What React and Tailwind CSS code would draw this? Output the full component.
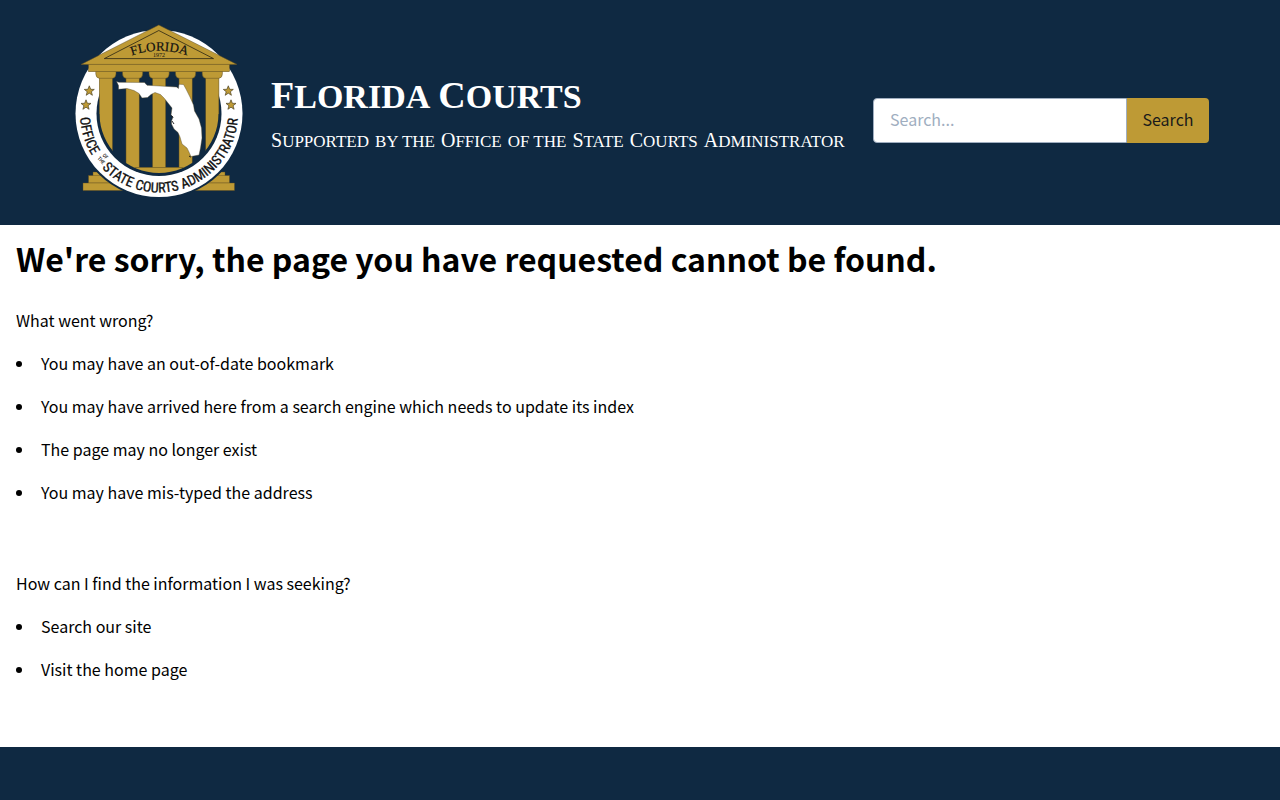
import React from 'react';

const STAR = 'M0 -5.2L1.4 -1.7L5 -1.6L2.1 0.7L3.1 4.3L0 2.2L-3.1 4.3L-2.1 0.7L-5 -1.6L-1.4 -1.7Z';
const columns = [99.3, 126, 152.5, 179, 205.7];
const stars = [[89.3, 91], [86, 105], [228.3, 91], [231, 105]];

const reasons = [
  'You may have an out-of-date bookmark',
  'You may have arrived here from a search engine which needs to update its index',
  'The page may no longer exist',
  'You may have mis-typed the address',
];
const suggestions = ['Search our site', 'Visit the home page'];

function Seal() {
  return (
    <svg viewBox="71 24 176 177" className="w-[176px] h-[177px] shrink-0" role="img" aria-label="Office of the State Courts Administrator seal">
      <defs>
        <clipPath id="hall">
          <rect x="90" y="60" width="138" height="54" />
          <circle cx="159" cy="113.5" r="59.5" />
        </clipPath>
        <path id="ringText" d="M80 113.5A79 79 0 0 0 238 113.5" />
        <path id="pedimentText" d="M129 56.5A84 84 0 0 1 190 56.5" />
      </defs>

      {/* Steps */}
      <g fill="#be9a35" stroke="#5c4c22" strokeWidth="0.4">
        <rect x="93" y="172" width="132" height="5" />
        <rect x="88.5" y="175.5" width="141" height="7.5" />
        <rect x="83" y="183" width="151.5" height="7.5" />
      </g>

      {/* Ring */}
      <circle cx="159" cy="113.5" r="85.5" fill="#0f2942" />
      <circle cx="159" cy="113.5" r="83.5" fill="#fff" />
      <circle cx="159" cy="113.5" r="62.5" fill="#0f2942" />

      {/* Columns */}
      <g fill="#be9a35" stroke="#5c4c22" strokeWidth="0.5">
        <rect x="110" y="72" width="98" height="12" fill="#0f2942" stroke="none" />
        <g clipPath="url(#hall)">
          {columns.map(x => (
            <rect key={x} x={x} y="76" width="13.2" height="92" />
          ))}
          <rect x="100" y="167.3" width="118" height="8" />
        </g>
        {columns.map(x => (
          <path key={x} d={`M${x - 3.5} 71H${x + 16.7}V74Q${x + 16.5} 78 ${x + 13.2} 78.3H${x}Q${x - 3.3} 78 ${x - 3.5} 74Z`} />
        ))}
        <rect x="88.5" y="64" width="141" height="7.7" />
        <path d="M158.8 25L237 64.4H81Z" />
        <path d="M158.8 30.5L213.5 58.6H104.3Z" fill="none" stroke="#2a2412" strokeWidth="0.8" />
      </g>

      {/* State outline */}
      <path
        d="M116.5 81.5L119 82.3L144.5 82.5L147 85.3L160 86L176.5 87L178.5 88.5L179 84.3L183.5 84.5L186 89L190 97L193.5 105L194.5 111L199 119L201.5 128L202 138L200.5 148L199 155L191 156.5L188.5 151L187 148L182 144L180 137L178 132.5L174 129L171.5 124L171.5 121L173 117L171 115L172 108L168 103L164 98L160.5 94.5L155 92.5L151 94.5L147.5 97.5L142 98L139 93.5L134 90.5L127 88.5L118.5 89.3L118.5 85.5Z"
        fill="#fff" stroke="#4c4224" strokeWidth="0.4" strokeLinejoin="round"
      />
      <path d="M172 121l2 3M171.5 115.5l1.5 2M189 156l2 1.2" stroke="#111" strokeWidth="0.9" fill="none" />

      {stars.map(([x, y]) => (
        <path key={`${x}-${y}`} d={STAR} transform={`translate(${x} ${y})`} fill="#be9a35" stroke="#4c4224" strokeWidth="0.7" />
      ))}

      <g fill="#111" fontFamily="'Liberation Serif', serif">
        <text fontSize="13" stroke="#111" strokeWidth="0.2"><textPath href="#pedimentText" startOffset="50%" textAnchor="middle">FLORIDA</textPath></text>
        <text x="159" y="57" fontSize="6" textAnchor="middle">1972</text>
      </g>
      <g fill="#111" stroke="#111" strokeWidth="0.3" fontFamily="'Liberation Sans Narrow', 'Roboto Condensed', 'Liberation Sans', sans-serif" fontSize="14">
        <text><textPath href="#ringText" startOffset="4">OFFICE</textPath></text>
        <text><textPath href="#ringText" startOffset="60">STATE</textPath></text>
        <text><textPath href="#ringText" startOffset="99">COURTS</textPath></text>
        <text><textPath href="#ringText" startOffset="148">ADMINISTRATOR</textPath></text>
        <g fontSize="5" textAnchor="middle" strokeWidth="0.1">
          <text transform="translate(104 157.5) rotate(48)">OF</text>
          <text transform="translate(100 161.5) rotate(48)">THE</text>
        </g>
      </g>
    </svg>
  );
}

function SiteTitle() {
  return (
    <div className="font-['Liberation_Serif',serif] text-white uppercase">
      <p className="flex gap-2 items-baseline font-bold text-[34px] leading-[48px]">
        {['Florida', 'Courts'].map(w => (
          <span key={w} className="block first-letter:text-[38px]">{w}</span>
        ))}
      </p>
      <p className="flex gap-[6px] items-baseline text-[17px] leading-[27px] mt-[6px] whitespace-nowrap">
        <span className="block first-letter:text-[20px]">Supported</span>
        <span>by the</span>
        <span className="block first-letter:text-[20px]">Office</span>
        <span>of the</span>
        {['State', 'Courts', 'Administrator'].map(w => (
          <span key={w} className="block first-letter:text-[20px]">{w}</span>
        ))}
      </p>
    </div>
  );
}

function BulletList({ items }) {
  return (
    <ul className="list-disc list-inside mb-16">
      {items.map(item => (
        <li key={item} className="mb-4"><span className="pl-0.5">{item}</span></li>
      ))}
    </ul>
  );
}

export default function App() {
  return (
    <div className="min-h-screen flex flex-col bg-white text-black font-['Noto_Sans_CJK_SC',sans-serif] text-[16px] leading-[27px]">
      <header className="bg-[#0f2942] py-6 px-[71px] flex items-center justify-between">
        <div className="flex items-center gap-6">
          <Seal />
          <SiteTitle />
        </div>
        <form className="flex w-[336px] h-[45px] mt-4 shrink-0" role="search" onSubmit={e => e.preventDefault()}>
          <input
            type="search"
            aria-label="Search"
            placeholder="Search..."
            className="flex-1 min-w-0 bg-white border border-[#a0aec0] rounded-l px-4 pb-0.5 text-black placeholder:text-[#a0aec0] outline-none"
          />
          <button type="submit" className="w-[82px] bg-[#be9a35] rounded-r pb-0.5 text-[#1a1a1a]">Search</button>
        </form>
      </header>

      <main className="px-4 pt-3">
        <h1 className="text-[32px] leading-[42px] font-bold mb-7">We're sorry, the page you have requested cannot be found.</h1>
        <p className="mb-4">What went wrong?</p>
        <BulletList items={reasons} />
        <p className="mb-4">How can I find the information I was seeking?</p>
        <BulletList items={suggestions} />
      </main>

      <footer className="bg-[#0f2942] flex-1" />
    </div>
  );
}
